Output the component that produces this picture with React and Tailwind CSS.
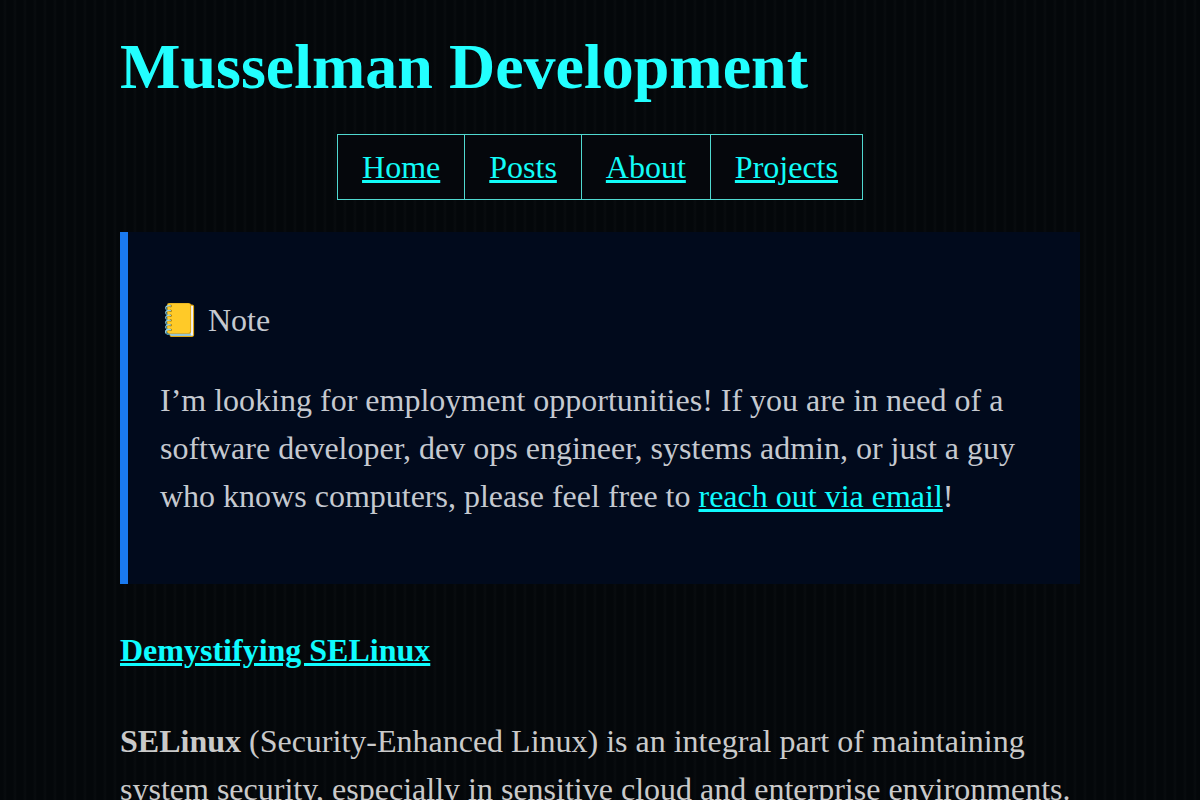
import React from 'react';

const navLinks = [
  { label: 'Home', href: '#home' },
  { label: 'Posts', href: '#posts' },
  { label: 'About', href: '#about' },
  { label: 'Projects', href: '#projects' },
];

const Header = () => (
  <header>
    <h1 className="text-[64px] leading-[94px] font-bold text-[#22ffff]">Musselman Development</h1>
    <nav className="mt-5 flex justify-center">
      <ul className="flex divide-x divide-[#50d8d0] border border-[#50d8d0] bg-[#05070c]">
        {navLinks.map((link) => (
          <li key={link.label} className="px-6 py-2">
            <a href={link.href} className="text-[#12fcf8] underline">{link.label}</a>
          </li>
        ))}
      </ul>
    </nav>
  </header>
);

const Note = () => (
  <aside className="mt-8 border-l-8 border-[#1a7af0] bg-[#010a1c] px-8 py-16 text-[#c5c9d0]">
    <p>📒 Note</p>
    <p className="mt-8">
      I’m looking for employment opportunities! If you are in need of a software developer, dev ops
      engineer, systems admin, or just a guy who knows computers, please feel free to{' '}
      <a href="mailto:hello@example.com" className="text-[#0ffcff] underline">reach out via email</a>!
    </p>
  </aside>
);

const App = () => (
  <div className="min-h-screen bg-[#04070a] bg-[repeating-linear-gradient(90deg,#04070a_0px,#04070a_3px,#090c0f_5px,#04070a_7px,#04070a_10px)] font-['Liberation_Serif',serif] text-[32px] leading-[48px] text-[#cacaca]">
    <div className="mx-auto w-4/5 pt-5 pb-16">
      <Header />
      <main>
        <Note />
        <article>
          <h2 className="mt-[42px] mb-[43px] font-bold">
            <a href="#selinux" className="text-[#0ffcff] underline">Demystifying SELinux</a>
          </h2>
          <p>
            <strong>SELinux</strong> (Security-Enhanced Linux) is an integral part of maintaining
            system security, especially in sensitive cloud and enterprise environments.
          </p>
        </article>
      </main>
    </div>
  </div>
);

export default App;
